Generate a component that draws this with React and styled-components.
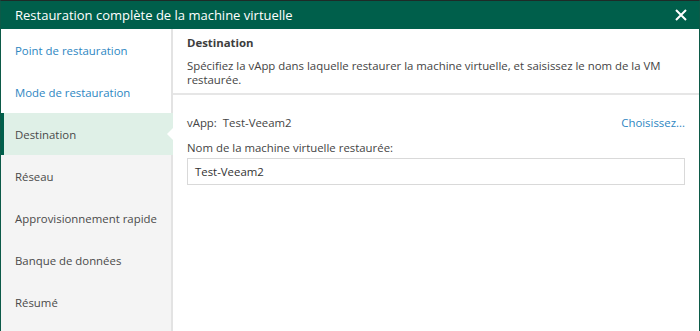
import React from "react";
import styled, { createGlobalStyle } from "styled-components";

const Global = createGlobalStyle`
  html, body { margin: 0; padding: 0; background: #ffffff; }
  body { font-family: "Open Sans", "Noto Sans", sans-serif; }
  * { box-sizing: border-box; }
`;

const Window = styled.div`
  width: 700px;
  height: 331px;
  display: flex;
  flex-direction: column;
  border-top: 1px solid #1e2b28;
  border-left: 1px solid #0c5a48;
  border-right: 1px solid #0c5a48;
  background: #fff;
  overflow: hidden;
`;

const TitleBar = styled.div`
  height: 28px;
  flex: none;
  background: #005f4b;
  color: #fff;
  display: flex;
  align-items: center;
  justify-content: space-between;
  padding: 0 10px 0 14px;
  font-size: 13px;
`;

const CloseBtn = styled.div`
  width: 16px;
  height: 16px;
  display: flex;
  align-items: center;
  justify-content: center;
`;

const Body = styled.div`
  flex: 1;
  display: flex;
  min-height: 0;
`;

const Sidebar = styled.div`
  width: 172px;
  flex: none;
  background: #f4f4f4;
  border-right: 2px solid #e3e3e3;
  display: flex;
  flex-direction: column;
`;

const Step = styled.div`
  height: 42px;
  flex: none;
  display: flex;
  align-items: center;
  padding-left: 14px;
  font-size: 11.4px;
  position: relative;
  background: ${(p) => (p.$state === "done" ? "#ffffff" : p.$state === "active" ? "#dff0e7" : "transparent")};
  color: ${(p) => (p.$state === "done" ? "#2d86c2" : "#4a4a4a")};
  ${(p) => p.$state === "active" && `
    margin-left: -1px;
    border-left: 4px solid #005f4b;
    padding-left: 11px;
    margin-right: -2px;
    &::after {
      content: "";
      position: absolute;
      right: 0;
      top: 50%;
      margin-top: -6px;
      border-top: 6px solid transparent;
      border-bottom: 6px solid transparent;
      border-right: 6px solid #ffffff;
    }
  `}
`;

const Content = styled.div`
  flex: 1;
  display: flex;
  flex-direction: column;
  min-width: 0;
`;

const Header = styled.div`
  padding: 6px 14px 6px 14px;
  border-bottom: 2px solid #e6e6e6;
  color: #444;
  font-size: 11.4px;
`;

const HeaderTitle = styled.div`
  font-weight: 700;
  line-height: 16px;
  margin-bottom: 8px;
  color: #3d3d3d;
`;

const HeaderDesc = styled.div`
  line-height: 14px;
`;

const Form = styled.div`
  padding: 19px 14px 0 14px;
  font-size: 11.4px;
  color: #444;
  display: flex;
  flex-direction: column;
`;

const Row = styled.div`
  display: flex;
  justify-content: space-between;
  align-items: center;
  line-height: 18px;
`;

const Label = styled.span`
  margin-right: 6px;
`;

const Link = styled.span`
  color: #2d86c2;
`;

const FieldLabel = styled.div`
  margin-top: 8px;
  line-height: 16px;
`;

const Input = styled.div`
  margin-top: 2px;
  height: 27px;
  border: 1px solid #d9d9d9;
  display: flex;
  align-items: center;
  padding-left: 7px;
  color: #333;
`;

const steps = [
  { label: "Point de restauration", state: "done" },
  { label: "Mode de restauration", state: "done" },
  { label: "Destination", state: "active" },
  { label: "Réseau" },
  { label: "Approvisionnement rapide" },
  { label: "Banque de données" },
  { label: "Résumé" },
];

export default function App() {
  return (
    <>
      <Global />
      <Window>
        <TitleBar>
          <span>Restauration complète de la machine virtuelle</span>
          <CloseBtn>
            <svg width="12" height="12" viewBox="0 0 12 12">
              <path d="M1 1 L11 11 M11 1 L1 11" stroke="#fff" strokeWidth="2" />
            </svg>
          </CloseBtn>
        </TitleBar>
        <Body>
          <Sidebar>
            {steps.map((s) => (
              <Step key={s.label} $state={s.state}>
                {s.label}
              </Step>
            ))}
          </Sidebar>
          <Content>
            <Header>
              <HeaderTitle>Destination</HeaderTitle>
              <HeaderDesc>
                Spécifiez la vApp dans laquelle restaurer la machine virtuelle, et saisissez le nom de la VM restaurée.
              </HeaderDesc>
            </Header>
            <Form>
              <Row>
                <span>
                  <Label>vApp:</Label>Test-Veeam2
                </span>
                <Link>Choisissez...</Link>
              </Row>
              <FieldLabel>Nom de la machine virtuelle restaurée:</FieldLabel>
              <Input>Test-Veeam2</Input>
            </Form>
          </Content>
        </Body>
      </Window>
    </>
  );
}
